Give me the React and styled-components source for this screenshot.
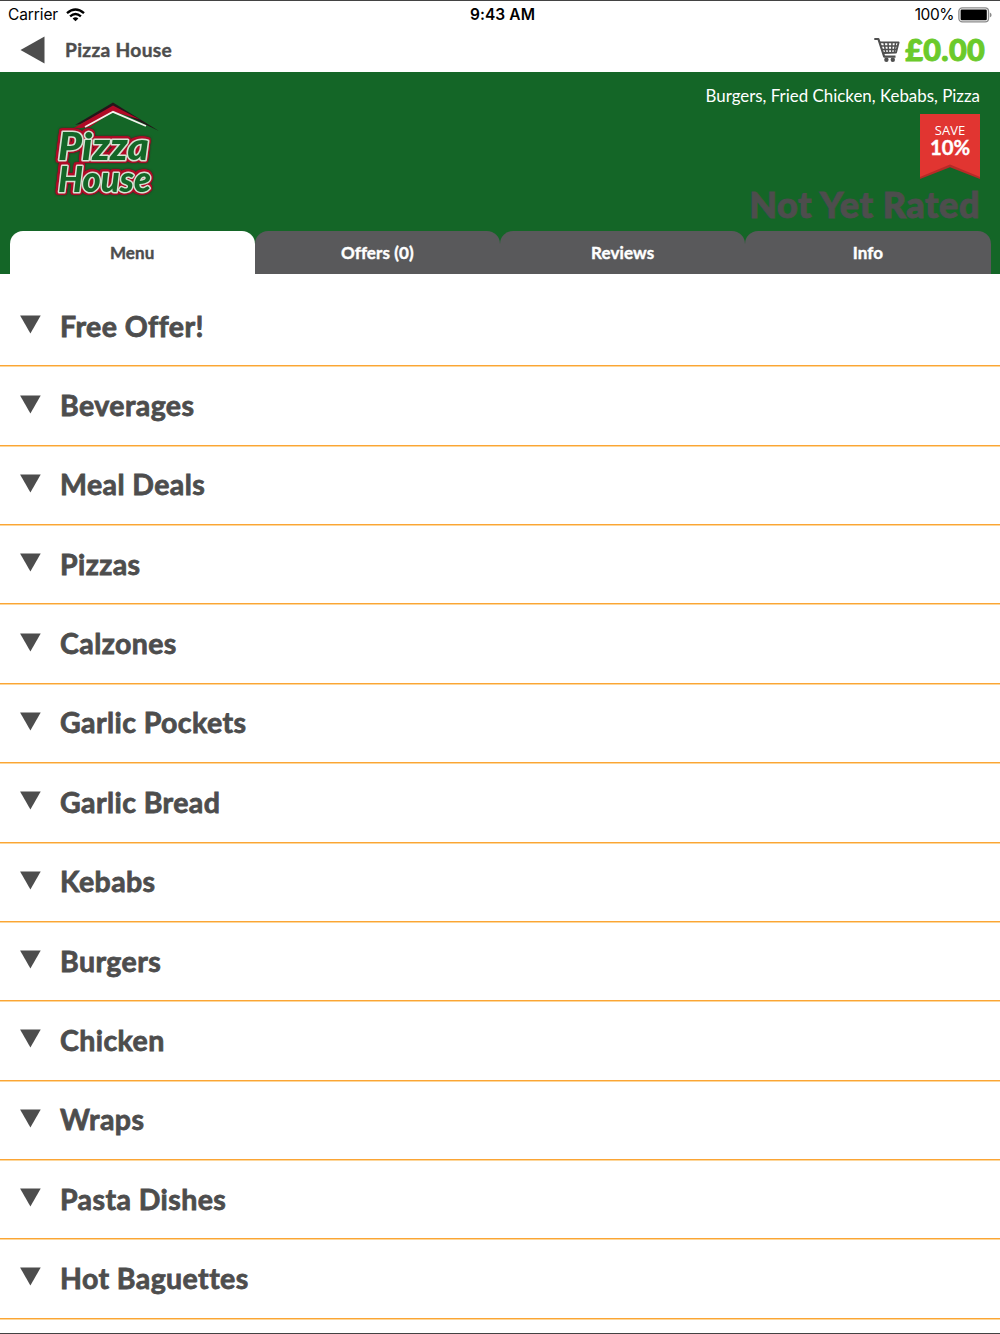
import React, { useState } from "react";
import styled, { createGlobalStyle } from "styled-components";

const GlobalStyle = createGlobalStyle`
  * {
    box-sizing: border-box;
  }

  body {
    margin: 0;
    background-color: #ffffff;
    font-family: Lato, sans-serif;
    font-variant-ligatures: none;
    color: #4d4d4d;
  }
`;

const Page = styled.div`
  display: flex;
  flex-direction: column;
  width: 100%;
  height: 1334px;
  overflow: hidden;
  border-top: 1px solid #434343;
  border-bottom: 1px solid #434343;
`;

// Barra de status
const StatusBar = styled.div`
  display: grid;
  grid-template-columns: 1fr auto 1fr;
  align-items: center;
  flex: none;
  height: 27px;
  padding: 0 8px 0 8px;
  font-family: Inter, sans-serif;
  font-size: 15.5px;
  color: #000000;
`;

const StatusSide = styled.div`
  display: flex;
  align-items: center;
  justify-content: ${({ $end }) => ($end ? "flex-end" : "flex-start")};
  gap: ${({ $end }) => ($end ? "4px" : "8px")};
  letter-spacing: ${({ $end }) => ($end ? "-0.45px" : "-0.1px")};
`;

const Clock = styled.span`
  padding-left: 5px;
  font-weight: 600;
  letter-spacing: 0.1px;
`;

// Barra de navegação
const NavBar = styled.header`
  display: flex;
  align-items: center;
  flex: none;
  height: 44px;
  padding: 0 15px 0 20px;
`;

const BackButton = styled.button`
  display: flex;
  padding: 0;
  margin-right: 20px;
  border: none;
  background: none;
`;

const NavTitle = styled.h1`
  flex: 1;
  margin: 0;
  padding-bottom: 2px;
  font-size: 19.2px;
  font-weight: 700;
  letter-spacing: 0.3px;
  -webkit-text-stroke: 0.4px currentColor;
`;

const Basket = styled.div`
  display: flex;
  align-items: center;
  gap: 5px;
`;

const Total = styled.span`
  font-size: 30.6px;
  line-height: 40px;
  font-weight: 900;
  letter-spacing: 0.3px;
  color: #6bca2b;
  -webkit-text-stroke: 1px currentColor;
`;

// Cabeçalho do restaurante
const Hero = styled.section`
  display: flex;
  flex-direction: column;
  flex: none;
  height: 202px;
  background-color: #146627;
`;

const HeroBody = styled.div`
  display: flex;
  justify-content: space-between;
  height: 159px;
  padding: 13px 20px 0 50px;
`;

const LogoBox = styled.div`
  padding-top: 12px;
`;

const Summary = styled.div`
  display: flex;
  flex-direction: column;
  align-items: flex-end;
`;

const Cuisines = styled.p`
  margin: 0;
  font-size: 16.9px;
  line-height: 22px;
  color: #ffffff;
`;

const Ribbon = styled.div`
  width: 60px;
  height: 65px;
  margin-top: 7px;
  background-color: #b72a27;
  clip-path: polygon(0 0, 100% 0, 100% 100%, 50% 82%, 0 100%);
`;

const RibbonFace = styled.div`
  display: flex;
  flex-direction: column;
  align-items: center;
  height: 63px;
  padding-top: 9px;
  background-color: #e13531;
  color: #ffffff;
  clip-path: polygon(0 0, 100% 0, 100% 100%, 50% 80%, 0 100%);
`;

const RibbonLabel = styled.span`
  font-family: "Open Sans", sans-serif;
  font-size: 13px;
  line-height: 15px;
`;

const RibbonValue = styled.span`
  font-size: 20.3px;
  line-height: 18px;
  font-weight: 700;
  -webkit-text-stroke: 0.4px currentColor;
`;

const Rating = styled.p`
  margin: 3px 0 0;
  font-size: 36px;
  line-height: 44px;
  font-weight: 900;
  letter-spacing: 0.55px;
  color: #4d4d4d;
  -webkit-text-stroke: 1px currentColor;
`;

const Tabs = styled.nav`
  display: flex;
  height: 43px;
  padding: 0 9.5px;
`;

const Tab = styled.button`
  flex: 1;
  padding: 0 0 1px;
  border: none;
  border-radius: 13px 13px 0 0;
  background-color: ${({ $active }) => ($active ? "#ffffff" : "#59595b")};
  font-family: inherit;
  font-size: 17px;
  font-weight: 700;
  font-variant-ligatures: none;
  color: ${({ $active }) => ($active ? "#4d4d4d" : "#ffffff")};
  letter-spacing: 0.1px;
  -webkit-text-stroke: 0.4px currentColor;
`;

// Lista de categorias
const CategoryList = styled.ul`
  flex: 1;
  min-height: 0;
  margin: 0;
  padding: 13px 0 0;
  overflow: hidden;
  list-style: none;
`;

const Category = styled.li`
  display: flex;
  align-items: center;
  gap: 19px;
  height: 79.37px;
  padding: 0 20px;
  border-bottom: 1px solid #fba535;
  box-shadow: 0 1px 0 #fdd79c;
`;

const Arrow = styled.svg`
  display: block;
  margin-bottom: 3px;
`;

const CategoryName = styled.h2`
  margin: 0;
  padding-bottom: 1px;
  font-size: 28.5px;
  font-weight: 700;
  letter-spacing: 0.42px;
  -webkit-text-stroke: 0.8px currentColor;
`;

// Letreiro: a sombra vermelha contorna o traço branco
const LogoSign = styled.g`
  filter: drop-shadow(1.4px 0 0 #b00a26) drop-shadow(-1.4px 0 0 #b00a26)
    drop-shadow(0 1.4px 0 #b00a26) drop-shadow(0 -1.4px 0 #b00a26)
    drop-shadow(0 0 0.8px #4a1520);
`;

const LogoText = styled.text`
  font-family: Lato, sans-serif;
  font-size: ${({ $size }) => $size}px;
  font-weight: 900;
  font-style: italic;
  fill: #146627;
  stroke: #d6e4d4;
  stroke-width: 3px;
  stroke-linejoin: round;
  paint-order: stroke;
`;

const categories = [
  "Free Offer!",
  "Beverages",
  "Meal Deals",
  "Pizzas",
  "Calzones",
  "Garlic Pockets",
  "Garlic Bread",
  "Kebabs",
  "Burgers",
  "Chicken",
  "Wraps",
  "Pasta Dishes",
  "Hot Baguettes",
];

const tabs = ["Menu", "Offers (0)", "Reviews", "Info"];

const WifiIcon = () => (
  <svg width="19" height="14" viewBox="0 0 19 14" fill="none" stroke="#000" strokeWidth="2.4">
    <path d="M1 5.2 Q9.5 -2.2 18 5.2" />
    <path d="M4.1 8.3 Q9.5 3.6 14.9 8.3" />
    <path d="M6.6 10.4 Q9.5 8 12.4 10.4 L9.5 13.3 Z" fill="#000" stroke="none" />
  </svg>
);

const BatteryIcon = () => (
  <svg width="34" height="16" viewBox="0 0 34 16">
    <rect x="0.9" y="0.9" width="29.6" height="14" rx="3.4" fill="none" stroke="#8a8a8a" strokeWidth="1.3" />
    <rect x="2.6" y="2.6" width="26.2" height="10.6" rx="1.2" fill="#000" />
    <path d="M31.8 5.5 Q33.6 6.4 33.6 8 Q33.6 9.6 31.8 10.5 Z" fill="#8a8a8a" />
  </svg>
);

const CartIcon = () => (
  <svg width="26" height="26" viewBox="0 0 26 26" fill="none" stroke="#4f4f4f" strokeLinejoin="round">
    <path d="M0.3 2 H4.4 L10.2 19.6 H21.5" strokeWidth="2.2" />
    <path d="M5.6 5.4 H24.6 L22 15.6 L9.4 16" strokeWidth="1.9" />
    <path d="M6.8 8.9 H24 M8 12.4 H23 M10 5.4 L11.8 16 M14 5.4 L14.6 16 M18 5.4 L17.6 16 M21.6 5.4 L20.2 15.6" strokeWidth="1.5" />
    <circle cx="12.4" cy="22.8" r="2.2" fill="#4f4f4f" stroke="none" />
    <circle cx="18.8" cy="22.8" r="2.2" fill="#4f4f4f" stroke="none" />
  </svg>
);

const Logo = () => (
  <svg width="112" height="104" viewBox="50 97 112 104">
    <path d="M113 102.5 L159 131 L113 109 L80 124 L75 125 Z" fill="#24161a" />
    <path d="M113 105.5 L140 119.5 L113 111.5 L90 127 L72 129 Z" fill="#b00a26" />
    <path d="M85 127 L113 111.8 L146 126" fill="none" stroke="#f3f3ee" strokeWidth="1.8" />
    <LogoSign>
      <LogoText $size={37} x="58" y="159.5" textLength="91" lengthAdjust="spacingAndGlyphs">
        Pizza
      </LogoText>
      <LogoText $size={36} x="58" y="191.5" textLength="93" lengthAdjust="spacingAndGlyphs">
        House
      </LogoText>
    </LogoSign>
  </svg>
);

const App = () => {
  const [activeTab, setActiveTab] = useState("Menu");

  return (
    <Page>
      <GlobalStyle />
      <StatusBar>
        <StatusSide>
          <span>Carrier</span>
          <WifiIcon />
        </StatusSide>
        <Clock>9:43 AM</Clock>
        <StatusSide $end>
          <span>100%</span>
          <BatteryIcon />
        </StatusSide>
      </StatusBar>

      <NavBar>
        <BackButton aria-label="Back">
          <svg width="25" height="28" viewBox="0 0 25 28">
            <path d="M0.5 14 L24.5 0.5 V27.5 Z" fill="#4d4d4d" />
          </svg>
        </BackButton>
        <NavTitle>Pizza House</NavTitle>
        <Basket>
          <CartIcon />
          <Total>£0.00</Total>
        </Basket>
      </NavBar>

      <Hero>
        <HeroBody>
          <LogoBox>
            <Logo />
          </LogoBox>
          <Summary>
            <Cuisines>Burgers, Fried Chicken, Kebabs, Pizza</Cuisines>
            <Ribbon>
              <RibbonFace>
                <RibbonLabel>SAVE</RibbonLabel>
                <RibbonValue>10%</RibbonValue>
              </RibbonFace>
            </Ribbon>
            <Rating>Not Yet Rated</Rating>
          </Summary>
        </HeroBody>
        <Tabs>
          {tabs.map((tab) => (
            <Tab key={tab} $active={tab === activeTab} onClick={() => setActiveTab(tab)}>
              {tab}
            </Tab>
          ))}
        </Tabs>
      </Hero>

      <CategoryList>
        {categories.map((name) => (
          <Category key={name}>
            <Arrow width="21" height="19" viewBox="0 0 21 19">
              <path d="M0.1 0.5 H20.7 L10.4 18.5 Z" fill="#4d4d4d" />
            </Arrow>
            <CategoryName>{name}</CategoryName>
          </Category>
        ))}
      </CategoryList>
    </Page>
  );
};

export default App;
